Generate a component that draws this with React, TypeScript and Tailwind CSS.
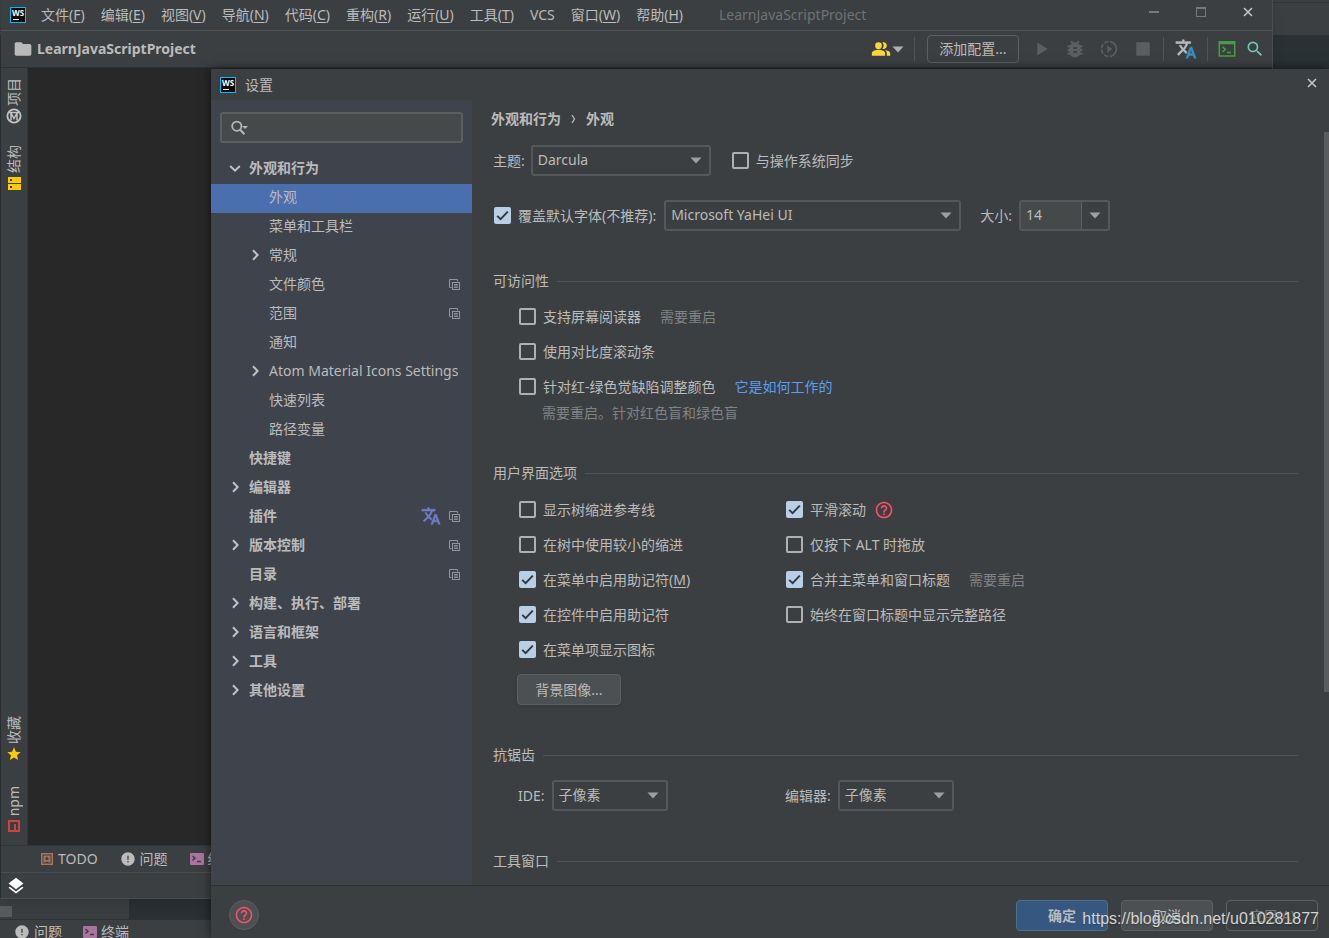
import { useState } from 'react';
import type { ReactNode } from 'react';
import {
  MdBugReport,
  MdError,
  MdFolder,
  MdHelpOutline,
  MdLayers,
  MdPeopleAlt,
  MdPlayArrow,
  MdSearch,
  MdSlowMotionVideo,
  MdStar,
  MdStop,
} from 'react-icons/md';

const MENUS = [
  ['文件', 'F'],
  ['编辑', 'E'],
  ['视图', 'V'],
  ['导航', 'N'],
  ['代码', 'C'],
  ['重构', 'R'],
  ['运行', 'U'],
  ['工具', 'T'],
  ['VCS', ''],
  ['窗口', 'W'],
  ['帮助', 'H'],
];

type TreeNode = {
  label: string;
  level: 0 | 1;
  arrow?: 'open' | 'closed';
  project?: boolean;
  translate?: boolean;
};

const TREE: TreeNode[] = [
  { label: '外观和行为', level: 0, arrow: 'open' },
  { label: '外观', level: 1 },
  { label: '菜单和工具栏', level: 1 },
  { label: '常规', level: 1, arrow: 'closed' },
  { label: '文件颜色', level: 1, project: true },
  { label: '范围', level: 1, project: true },
  { label: '通知', level: 1 },
  { label: 'Atom Material Icons Settings', level: 1, arrow: 'closed' },
  { label: '快速列表', level: 1 },
  { label: '路径变量', level: 1 },
  { label: '快捷键', level: 0 },
  { label: '编辑器', level: 0, arrow: 'closed' },
  { label: '插件', level: 0, project: true, translate: true },
  { label: '版本控制', level: 0, arrow: 'closed', project: true },
  { label: '目录', level: 0, project: true },
  { label: '构建、执行、部署', level: 0, arrow: 'closed' },
  { label: '语言和框架', level: 0, arrow: 'closed' },
  { label: '工具', level: 0, arrow: 'closed' },
  { label: '其他设置', level: 0, arrow: 'closed' },
];

function WsLogo() {
  return (
    <svg viewBox="0 0 16 16" className="h-4 w-4 shrink-0">
      <rect width="16" height="16" fill="#12b8e6" />
      <rect x="1" y="1" width="14" height="14" fill="#0a0a0a" />
      <text x="8" y="8.6" fontSize="8" fontWeight="700" textAnchor="middle" fill="#fff">
        WS
      </text>
      <rect x="3" y="12" width="6" height="1" fill="#fff" />
    </svg>
  );
}

function Triangle({ className }: { className: string }) {
  return (
    <svg viewBox="0 0 12 7" className={`h-[7px] w-3 ${className}`}>
      <path d="M0.5 0.5h11L6 6.5z" fill="currentColor" />
    </svg>
  );
}

function CloseIcon() {
  return (
    <svg viewBox="0 0 10 10" className="h-[10px] w-[10px]">
      <path d="M1 1l8 8M9 1L1 9" stroke="#c8c8c8" strokeWidth="1.5" />
    </svg>
  );
}

function TranslateIcon({ className, accent }: { className: string; accent: string }) {
  return (
    <svg viewBox="0 0 24 24" className={className} strokeWidth="0.7">
      <path
        fill="currentColor"
        stroke="currentColor"
        d="M12.87 15.07l-2.54-2.51.03-.03c1.74-1.94 2.98-4.17 3.71-6.53H17V4h-7V2H8v2H1v1.99h11.17C11.5 7.92 10.44 9.75 9 11.35 8.07 10.32 7.3 9.19 6.69 8h-2c.73 1.63 1.73 3.17 2.98 4.56l-5.09 5.02L4 19l5-5 3.11 3.11.76-2.04z"
      />
      <path
        fill={accent}
        stroke={accent}
        d="M18.5 10h-2L12 22h2l1.12-3h4.75L21 22h2l-4.5-12zm-2.62 7l1.62-4.33L19.12 17h-3.24z"
      />
    </svg>
  );
}

function TerminalIcon() {
  return (
    <svg viewBox="0 0 14 12" className="h-3 w-[14px] shrink-0">
      <rect width="14" height="12" rx="1" fill="#a9749f" />
      <path d="M2.5 3l2.5 2.2L2.5 7.4M7 8.5h4" fill="none" stroke="#3c3f41" strokeWidth="1.4" />
    </svg>
  );
}

function TodoIcon() {
  return (
    <svg viewBox="0 0 12 12" className="h-3 w-3 shrink-0">
      <rect x="0.75" y="0.75" width="10.5" height="10.5" fill="none" stroke="#a87561" strokeWidth="1.5" />
      <path d="M2.5 2.5h7v7.5L6 8.6 2.5 10z" fill="#a87561" />
      <path d="M6 3.2l.8 1.6 1.6.1-1.3 1.1.5 1.6L6 6.8l-1.6.8.5-1.6-1.3-1.1 1.6-.1z" fill="#3c3f41" />
    </svg>
  );
}

function ProjectIcon() {
  return (
    <svg viewBox="0 0 11 11" className="h-[11px] w-[11px] shrink-0" fill="none" stroke="#8a969c">
      <path d="M2.5 8.5h-2v-8h8v2" />
      <rect x="3.5" y="3.5" width="7" height="7" />
      <path d="M5 5.5h4M5 7h4M5 8.5h4" strokeWidth="0.9" />
    </svg>
  );
}

function TreeArrow({ state }: { state?: 'open' | 'closed' }) {
  return (
    <svg viewBox="0 0 12 12" className="h-3 w-3 shrink-0" fill="none" stroke="#bfc2c5" strokeWidth="2">
      {state === 'open' ? <path d="M1.2 4l4.8 4.6L10.8 4" /> : null}
      {state === 'closed' ? <path d="M4 1.2L8.6 6 4 10.8" /> : null}
    </svg>
  );
}

function Checkbox({ label, mnemonic, checked }: { label: string; mnemonic?: string; checked?: boolean }) {
  return (
    <label className="flex items-center gap-[7px] whitespace-nowrap">
      <span className="relative h-[17px] w-[17px] shrink-0">
        <input
          type="checkbox"
          defaultChecked={checked}
          className="peer block h-[17px] w-[17px] appearance-none rounded-xs border-2 border-[#b0b0b0] checked:border-[#b8cfe6] checked:bg-[#b8cfe6]"
        />
        <svg
          viewBox="0 0 17 17"
          className="pointer-events-none absolute inset-0 hidden h-[17px] w-[17px] peer-checked:block"
        >
          <path d="M3.2 8.8l3.4 3.4 7.2-7.6" fill="none" stroke="#32383d" strokeWidth="1.9" />
        </svg>
      </span>
      <span>
        {label}
        {mnemonic ? (
          <>
            (<u className="underline-offset-2">{mnemonic}</u>)
          </>
        ) : null}
      </span>
    </label>
  );
}

function ComboBox({ id, value, className }: { id: string; value: string; className: string }) {
  return (
    <div className={`relative h-[31px] ${className}`}>
      <select
        id={id}
        defaultValue={value}
        className="h-full w-full appearance-none rounded-[3px] border-2 border-[#555759] bg-[#3c3f41] pb-px pl-[5px] text-sm"
      >
        <option>{value}</option>
      </select>
      <Triangle className="pointer-events-none absolute top-3 right-[9px] text-[#9da0a2]" />
    </div>
  );
}

function Section({ title, children }: { title: string; children?: ReactNode }) {
  return (
    <section className="mt-10">
      <div className="flex h-5 items-center gap-2">
        <h2>{title}</h2>
        <div className="h-px flex-1 bg-[#515456]" />
      </div>
      {children}
    </section>
  );
}

function RailItem({ label, children }: { label: string; children: ReactNode }) {
  return (
    <button type="button" className="flex flex-col items-center gap-[2px]">
      <span className="rotate-180 leading-4 [text-orientation:sideways] [writing-mode:vertical-rl]">{label}</span>
      <span className="flex h-4 w-4 items-center justify-center">{children}</span>
    </button>
  );
}

function BackgroundWindow() {
  return (
    <div className="flex h-full flex-col">
      <div className="mt-[2px] h-[33px] border-t border-[#323537] bg-[#3c3f41]" />
      <div className="flex-1 bg-[#293134]" />
      <div className="flex h-[22px] items-center bg-[#293134]">
        <div className="flex h-full w-[129px] items-end bg-[#3c3f41] pb-[2px]">
          <div className="h-[11px] w-3 bg-[#595b5d]" />
        </div>
      </div>
      <div className="flex h-[19px] items-start gap-4 border-t border-[#2f3234] bg-[#3c3f41] pt-[2px] pl-[14px]">
        <div className="flex items-center gap-1">
          <MdError className="h-4 w-4" />
          <span>问题</span>
        </div>
        <div className="flex items-center gap-1 pl-[5px]">
          <TerminalIcon />
          <span>终端</span>
        </div>
      </div>
    </div>
  );
}

function IdeWindow() {
  return (
    <div className="absolute top-0 right-14 bottom-[39px] left-px flex flex-col border-r border-b border-[#4b4e50] bg-[#3c3f41] shadow-lg">
      <header className="flex h-[31px] items-center border-b border-[#515355] pl-[9px]">
        <WsLogo />
        <nav className="ml-[15px] flex gap-4">
          {MENUS.map(([label, key]) => (
            <button key={label} type="button" className="whitespace-nowrap">
              {label}
              {key ? (
                <>
                  (<u className="underline-offset-2">{key}</u>)
                </>
              ) : null}
            </button>
          ))}
        </nav>
        <span className="ml-9 text-[#6f7274]">LearnJavaScriptProject</span>
        <div className="mr-px ml-auto flex self-start">
          <button type="button" aria-label="最小化" className="flex h-6 w-[47px] items-center justify-center">
            <span className="h-[2px] w-[10px] bg-[#777a7c]" />
          </button>
          <button type="button" aria-label="最大化" className="flex h-6 w-[47px] items-center justify-center">
            <span className="h-[10px] w-[10px] border border-t-2 border-[#777a7c]" />
          </button>
          <button type="button" aria-label="关闭" className="flex h-6 w-[47px] items-center justify-center">
            <CloseIcon />
          </button>
        </div>
      </header>

      <div className="flex h-[37px] items-center border-b border-[#2f3133] pr-[7px] pl-3">
        <MdFolder className="h-5 w-5 text-[#b9b9b9]" />
        <span className="ml-1 font-bold">LearnJavaScriptProject</span>
        <div className="ml-auto flex items-center gap-px text-[#fdd835]">
          <MdPeopleAlt className="h-5 w-5" />
          <Triangle className="text-[#b0b0b0]" />
        </div>
        <div className="mx-[10px] h-6 w-px bg-[#515456]" />
        <button
          type="button"
          className="ml-[2px] h-7 w-[92px] rounded-[4px] border border-[#5e6060] text-center whitespace-nowrap"
        >
          添加配置...
        </button>
        <div className="ml-[13px] flex items-center gap-4 text-[#5c5e5f]">
          <MdPlayArrow className="h-[18px] w-[18px] scale-125" />
          <MdBugReport className="h-[18px] w-[18px] scale-125" />
          <MdSlowMotionVideo className="h-[18px] w-[18px] scale-110" />
          <MdStop className="h-[18px] w-[18px] scale-150" />
        </div>
        <div className="mx-[11px] h-6 w-px bg-[#515456]" />
        <TranslateIcon className="h-[22px] w-[22px] text-[#b9bcbe]" accent="#3592c4" />
        <div className="mx-[10px] h-6 w-px bg-[#515456]" />
        <svg viewBox="0 0 18 18" className="h-[18px] w-[18px]" fill="none" stroke="#43a047">
          <rect x="1.3" y="1.8" width="15.4" height="14.2" strokeWidth="1.5" />
          <path d="M1.3 3h15.4" strokeWidth="2.5" />
          <path d="M4.5 6.8L7.3 9.4l-2.8 2.6M9 12.6h4" strokeWidth="1.5" />
        </svg>
        <MdSearch className="ml-[9px] h-5 w-5 text-[#6fc3b8]" />
      </div>

      <div className="flex flex-1">
        <aside className="flex w-[27px] flex-col justify-between border-r border-[#323537] pt-[10px] pb-[11px]">
          <div className="flex flex-col items-center gap-[21px]">
            <RailItem label="项目">
              <svg viewBox="0 0 16 16" className="h-4 w-4" fill="none" stroke="#c4c4c4">
                <circle cx="8" cy="8" r="6.6" strokeWidth="1.8" />
                <path d="M5 12.5V5l3 5.5L11 5v7.5M3 4.5h10" strokeWidth="1.5" />
              </svg>
            </RailItem>
            <RailItem label="结构">
              <svg viewBox="0 0 13 13" className="h-[13px] w-[13px]">
                <path d="M0 0h13v6H0zM0 7h13v6H0z" fill="#ffca0a" />
                <path d="M2 2h2v2H2zM2 9h2v2H2z" fill="#3c3f41" />
              </svg>
            </RailItem>
          </div>
          <div className="flex flex-col items-center gap-6">
            <RailItem label="收藏">
              <MdStar className="h-4 w-4 text-[#ffca0a]" />
            </RailItem>
            <RailItem label="npm">
              <svg viewBox="0 0 12 12" className="h-3 w-3">
                <path d="M1 1h10v10H1z" fill="none" stroke="#cb4343" strokeWidth="2" />
                <path d="M6 4h2v7H6z" fill="#cb4343" />
              </svg>
            </RailItem>
          </div>
        </aside>
        <main className="flex-1 bg-[#282828]" />
      </div>

      <div className="flex h-[27px] items-center gap-[22px] border-t border-[#323537] pl-10">
        <button type="button" className="flex items-center gap-[5px]">
          <TodoIcon />
          TODO
        </button>
        <button type="button" className="flex items-center gap-1">
          <MdError className="h-4 w-4" />
          问题
        </button>
        <button type="button" className="flex items-center gap-1">
          <TerminalIcon />
          终端
        </button>
      </div>
      <footer className="flex h-[26px] items-center border-t border-[#4b4e50] pl-[5px]">
        <MdLayers className="h-5 w-5 text-white" />
      </footer>
    </div>
  );
}

function SettingsTree() {
  const [selected, setSelected] = useState('外观');

  return (
    <aside className="w-[261px] shrink-0 bg-[#3f434c]">
      <div className="mt-3 mr-[9px] ml-[9px] flex h-[31px] items-center rounded-[3px] border-2 border-[#5c5f61] bg-[#45494a] pl-2">
        <svg viewBox="0 0 18 16" className="h-4 w-[18px] shrink-0" fill="none" stroke="#b5b8ba">
          <circle cx="6.8" cy="6.2" r="4.6" strokeWidth="1.8" />
          <path d="M10 9.5l4.4 4.8" strokeWidth="2" />
          <path d="M12 6h6l-3 3z" fill="#b5b8ba" stroke="none" />
        </svg>
        <input type="text" aria-label="搜索设置" className="min-w-0 flex-1 bg-transparent px-1 outline-none" />
      </div>
      <ul className="mt-3">
        {TREE.map((node) => (
          <li key={node.label}>
            <button
              type="button"
              onClick={() => setSelected(node.label)}
              className={[
                'flex h-[29px] w-full items-center gap-2 pr-3 pb-[3px] text-left',
                node.level === 0 ? 'pl-[18px] font-bold' : 'pl-[38px]',
                node.label === selected ? 'bg-[#4b6eaf]' : '',
              ].join(' ')}
            >
              <TreeArrow state={node.arrow} />
              <span className="flex flex-1 items-center justify-between overflow-hidden whitespace-nowrap">
                {node.label}
                {node.translate ? <TranslateIcon className="h-5 w-5 text-[#6f7fc8]" accent="#6f7fc8" /> : null}
              </span>
              {node.project ? <ProjectIcon /> : null}
            </button>
          </li>
        ))}
      </ul>
    </aside>
  );
}

function AppearancePane() {
  return (
    <div className="flex min-w-0 flex-1">
      <div className="min-w-0 flex-1 pr-[26px] pl-[19px]">
        <div className="flex h-[38px] items-center gap-[10px] font-bold">
          <span>外观和行为</span>
          <svg viewBox="0 0 5 10" className="h-[10px] w-[5px]" fill="none" stroke="#bbbbbb">
            <path d="M1 1l2.5 4L1 9" strokeWidth="1.3" />
          </svg>
          <span>外观</span>
        </div>

        <div className="pl-[2px]">
          <div className="mt-[7px] flex items-center">
            <label htmlFor="theme">主题:</label>
            <ComboBox id="theme" value="Darcula" className="ml-[6px] w-[180px]" />
            <div className="ml-[21px]">
              <Checkbox label="与操作系统同步" />
            </div>
          </div>

          <div className="mt-6 flex items-center pl-px whitespace-nowrap">
            <Checkbox label="覆盖默认字体(不推荐):" checked />
            <ComboBox id="font" value="Microsoft YaHei UI" className="ml-2 w-[297px]" />
            <label htmlFor="size" className="ml-[19px]">
              大小:
            </label>
            <div className="ml-[7px] flex h-[31px] w-[91px] overflow-hidden rounded-[3px] border-2 border-[#555759]">
              <input
                id="size"
                type="text"
                defaultValue="14"
                className="min-w-0 flex-1 bg-[#45494a] pb-px pl-[5px] outline-none"
              />
              <button
                type="button"
                aria-label="选择大小"
                className="flex w-[27px] items-center justify-center border-l border-[#5e6060]"
              >
                <Triangle className="text-[#9da0a2]" />
              </button>
            </div>
          </div>

          <Section title="可访问性">
            <div className="mt-2 pl-[26px]">
              <div className="flex h-[35px] items-center gap-[19px]">
                <Checkbox label="支持屏幕阅读器" />
                <span className="text-[#808284]">需要重启</span>
              </div>
              <div className="flex h-[35px] items-center">
                <Checkbox label="使用对比度滚动条" />
              </div>
              <div className="flex h-[35px] items-center gap-[19px]">
                <Checkbox label="针对红-绿色觉缺陷调整颜色" />
                <a href="#color-blindness" className="text-[#589df6]">
                  它是如何工作的
                </a>
              </div>
              <p className="pb-px pl-[23px] leading-[18px] text-[#808284]">需要重启。针对红色盲和绿色盲</p>
            </div>
          </Section>

          <Section title="用户界面选项">
            <div className="mt-[9px] grid auto-rows-[35px] grid-cols-[267px_1fr] items-center pl-[26px]">
              <Checkbox label="显示树缩进参考线" />
              <div className="flex items-center gap-2">
                <Checkbox label="平滑滚动" checked />
                <MdHelpOutline className="h-5 w-5 text-[#f4506e]" />
              </div>
              <Checkbox label="在树中使用较小的缩进" />
              <Checkbox label="仅按下 ALT 时拖放" />
              <Checkbox label="在菜单中启用助记符" mnemonic="M" checked />
              <div className="flex items-center gap-[19px]">
                <Checkbox label="合并主菜单和窗口标题" checked />
                <span className="text-[#808284]">需要重启</span>
              </div>
              <Checkbox label="在控件中启用助记符" checked />
              <Checkbox label="始终在窗口标题中显示完整路径" />
              <Checkbox label="在菜单项显示图标" checked />
            </div>
            <button
              type="button"
              className="mt-[7px] ml-6 h-[31px] w-[104px] rounded-[4px] border border-[#5e6060] bg-[#4c5052] shadow-sm"
            >
              背景图像...
            </button>
          </Section>

          <Section title="抗锯齿">
            <div className="mt-[15px] grid grid-cols-[267px_1fr] pl-[25px]">
              <div className="flex items-center gap-[7px]">
                <label htmlFor="ide-aa">IDE:</label>
                <ComboBox id="ide-aa" value="子像素" className="w-[116px]" />
              </div>
              <div className="flex items-center gap-[7px]">
                <label htmlFor="editor-aa">编辑器:</label>
                <ComboBox id="editor-aa" value="子像素" className="w-[116px]" />
              </div>
            </div>
          </Section>

          <Section title="工具窗口" />
        </div>
      </div>
      <div className="mt-8 h-[560px] w-[5px] bg-[#5b5c5d]" />
    </div>
  );
}

function SettingsDialog() {
  return (
    <div
      role="dialog"
      aria-label="设置"
      className="absolute top-[69px] right-0 bottom-0 left-[211px] flex flex-col bg-[#3c3f41] shadow-[0_0_10px_rgba(0,0,0,0.6)]"
    >
      <header className="flex h-[31px] items-center justify-between pr-3 pl-[9px]">
        <div className="flex items-center gap-[9px]">
          <WsLogo />
          <h1>设置</h1>
        </div>
        <button type="button" aria-label="关闭设置" className="pb-1">
          <CloseIcon />
        </button>
      </header>
      <div className="flex min-h-0 flex-1">
        <SettingsTree />
        <AppearancePane />
      </div>
      <footer className="flex h-[53px] items-start gap-[13px] border-t border-[#2f3234] pt-[14px] pr-[11px] pl-[18px]">
        <button
          type="button"
          aria-label="帮助"
          className="mr-auto flex h-[30px] w-[30px] items-center justify-center rounded-full border border-[#5e6060] bg-[#4c5052] text-[#f4506e]"
        >
          <MdHelpOutline className="h-5 w-5" />
        </button>
        <button type="button" className="h-[31px] w-[92px] rounded-[4px] border border-[#4c708c] bg-[#365880] font-bold">
          确定
        </button>
        <button type="button" className="h-[31px] w-[92px] rounded-[4px] border border-[#5e6060] bg-[#4c5052]">
          取消
        </button>
        <button type="button" disabled className="h-[31px] w-[92px] rounded-[4px] border border-[#5e6060] text-[#777777]">
          应用(A)
        </button>
      </footer>
    </div>
  );
}

export default function App() {
  return (
    <div className="relative h-screen overflow-hidden bg-[#3c3f41] font-['Noto_Sans','Noto_Sans_CJK_SC',sans-serif] text-sm text-[#bbbbbb]">
      <BackgroundWindow />
      <IdeWindow />
      <SettingsDialog />
      <span className="pointer-events-none absolute right-[10px] bottom-[7px] font-['Liberation_Sans',sans-serif] text-base text-[#d4d4d4] text-shadow-sm">
        https://blog.csdn.net/u010281877
      </span>
    </div>
  );
}
